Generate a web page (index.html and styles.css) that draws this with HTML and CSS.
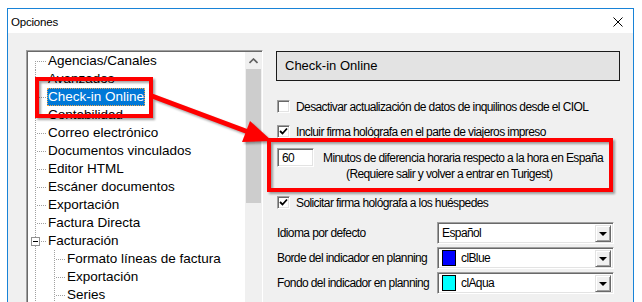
FILE: index.html
```html
<!DOCTYPE html>
<html lang="es">
<head>
<meta charset="UTF-8">
<title>Opciones</title>
<link rel="stylesheet" href="styles.css">
</head>
<body>
<div class="window">
    <div class="titlebar">
        <span class="title">Opciones</span>
        <svg class="close" width="10" height="10" viewBox="0 0 10 10"><path d="M0.5 0.5 L9.5 9.5 M9.5 0.5 L0.5 9.5" stroke="#000" stroke-width="1"/></svg>
    </div>

    <div class="content">
        <div class="tree">
            <ul class="tree-list">
                <li class="node first"><span class="label">Agencias/Canales</span></li>
                <li class="node"><span class="label">Avanzados</span></li>
                <li class="node selected"><span class="label">Check-in Online</span></li>
                <li class="node"><span class="label">Contabilidad</span></li>
                <li class="node"><span class="label">Correo electrónico</span></li>
                <li class="node"><span class="label">Documentos vinculados</span></li>
                <li class="node"><span class="label">Editor HTML</span></li>
                <li class="node"><span class="label">Escáner documentos</span></li>
                <li class="node"><span class="label">Exportación</span></li>
                <li class="node"><span class="label">Factura Directa</span></li>
                <li class="node open"><span class="toggle"></span><span class="label">Facturación</span></li>
                <li class="node child"><span class="label">Formato líneas de factura</span></li>
                <li class="node child"><span class="label">Exportación</span></li>
                <li class="node child"><span class="label">Series</span></li>
            </ul>
            <div class="scrollbar">
                <div class="scroll-up">
                    <svg width="9" height="6" viewBox="0 0 9 6"><path d="M0.5 5 L4.5 1 L8.5 5" fill="none" stroke="#606060" stroke-width="1.6"/></svg>
                </div>
                <div class="scroll-thumb"></div>
            </div>
        </div>

        <div class="page">
            <div class="page-title">Check-in Online</div>

            <div class="check row1"><span class="box"></span>Desactivar actualización de datos de inquilinos desde el CIOL</div>
            <div class="check row2"><span class="box checked"><svg width="9" height="9" viewBox="0 0 9 9"><path d="M1 4 L3.5 6.5 L8 1.5" fill="none" stroke="#000" stroke-width="1.8"/></svg></span>Incluir firma hológrafa en el parte de viajeros impreso</div>

            <div class="minutes">
                <div class="edit">60</div>
                <div class="minutes-label">
                    <span class="line">Minutos de diferencia horaria respecto a la hora en España</span>
                    <span class="line second">(Requiere salir y volver a entrar en Turigest)</span>
                </div>
            </div>

            <div class="check row3"><span class="box checked"><svg width="9" height="9" viewBox="0 0 9 9"><path d="M1 4 L3.5 6.5 L8 1.5" fill="none" stroke="#000" stroke-width="1.8"/></svg></span>Solicitar firma hológrafa a los huéspedes</div>

            <div class="field first-field">
                <span class="field-label">Idioma por defecto</span>
                <div class="combo"><span class="combo-text">Español</span><span class="combo-btn"></span></div>
            </div>
            <div class="field">
                <span class="field-label">Borde del indicador en planning</span>
                <div class="combo"><span class="swatch" style="background:#0000ff"></span><span class="combo-text">clBlue</span><span class="combo-btn"></span></div>
            </div>
            <div class="field">
                <span class="field-label">Fondo del indicador en planning</span>
                <div class="combo"><span class="swatch" style="background:#00ffff"></span><span class="combo-text">clAqua</span><span class="combo-btn"></span></div>
            </div>
        </div>
    </div>
</div>

<!-- anotaciones rojas -->
<svg class="marks" width="642" height="302" viewBox="0 0 642 302">
    <rect x="37" y="79" width="114" height="37" fill="none" stroke="#ff0000" stroke-width="4"/>
    <rect x="269" y="140" width="342" height="50" fill="none" stroke="#ff0000" stroke-width="4"/>
    <line x1="152" y1="96" x2="247" y2="131.5" stroke="#ff0000" stroke-width="5"/>
    <polygon points="242,142 250,121 272,141" fill="#ff0000"/>
</svg>
</body>
</html>
```

FILE: styles.css
```css
body {
  margin: 0;
  background: #fff;
  font-family: "Liberation Sans", Arial, sans-serif;
  color: #000;
  width: 642px;
  height: 302px;
  overflow: hidden;
  position: relative;
}
.window {
  margin: 8px 0 0 7px;
  width: 627px;
  height: 294px;
  box-sizing: border-box;
  border: 1px solid #1883d7;
  border-bottom: none;
  display: flex;
  flex-direction: column;
  overflow: hidden;
}
.titlebar {
  height: 24px;
  flex: none;
  background: #fff;
  display: flex;
  align-items: center;
  justify-content: space-between;
  padding: 0 10px 0 3px;
}
.title {
  font-size: 11.5px;
  letter-spacing: -0.2px;
  margin-top: 1px;
}
.close {
  margin-top: 1px;
}
.content {
  flex: 1;
  background: #f0f0f0;
  display: flex;
  align-items: flex-start;
  padding: 17px 0 0 18px;
}

/* arbol de opciones */
.tree {
  width: 237px;
  height: 270px;
  flex: none;
  box-sizing: border-box;
  border: 1px solid;
  border-color: #a0a0a0 #fff #fff #a0a0a0;
  box-shadow: inset 1px 1px 0 #696969;
  background: #fff;
  display: flex;
  padding: 1px 0 0 1px;
}
.tree-list {
  list-style: none;
  margin: 0;
  padding: 0;
  flex: 1;
}
.node {
  position: relative;
  height: 18px;
  line-height: 18px;
  padding-left: 20px;
  font-size: 13.5px;
  white-space: nowrap;
  background:
    repeating-linear-gradient(to bottom, #a0a0a0 0 1px, transparent 1px 2px) 7px 0 / 1px 100% no-repeat,
    repeating-linear-gradient(to right, #a0a0a0 0 1px, transparent 1px 2px) 9px 9px / 10px 1px no-repeat;
}
.node.first {
  background:
    repeating-linear-gradient(to bottom, #a0a0a0 0 1px, transparent 1px 2px) 7px 9px / 1px 9px no-repeat,
    repeating-linear-gradient(to right, #a0a0a0 0 1px, transparent 1px 2px) 9px 9px / 10px 1px no-repeat;
}
.node.child {
  padding-left: 39px;
  background:
    repeating-linear-gradient(to bottom, #a0a0a0 0 1px, transparent 1px 2px) 7px 0 / 1px 100% no-repeat,
    repeating-linear-gradient(to bottom, #a0a0a0 0 1px, transparent 1px 2px) 26px 0 / 1px 100% no-repeat,
    repeating-linear-gradient(to right, #a0a0a0 0 1px, transparent 1px 2px) 28px 9px / 10px 1px no-repeat;
}
.toggle {
  position: absolute;
  left: 3px;
  top: 5px;
  width: 9px;
  height: 9px;
  box-sizing: border-box;
  border: 1px solid #919191;
  background: #fff linear-gradient(#000, #000) center / 5px 1px no-repeat;
}
.label {
  display: inline-block;
  padding: 0 1px;
  margin-left: -1px;
  height: 18px;
}
.selected .label {
  background: #0078d7;
  color: #fff;
  outline: 1px dotted #f3a64a;
  outline-offset: -1px;
}
.scrollbar {
  width: 17px;
  flex: none;
  background: #f0f0f0;
  display: flex;
  flex-direction: column;
}
.scroll-up {
  height: 17px;
  display: flex;
  align-items: center;
  justify-content: center;
}
.scroll-thumb {
  margin: 0 1px;
  height: 134px;
  background: #cdcdcd;
}

/* pagina derecha */
.page {
  margin-left: 13px;
  margin-top: 1px;
  width: 344px;
  display: flex;
  flex-direction: column;
  font-size: 12px;
  letter-spacing: -0.6px;
  white-space: nowrap;
}
.page-title {
  height: 30px;
  box-sizing: border-box;
  border: 1px solid #1a1a1a;
  background: #e3e3e3;
  font-size: 13px;
  letter-spacing: 0;
  line-height: 28px;
  padding-left: 8px;
}
.check {
  height: 17px;
  display: flex;
  align-items: center;
  padding-left: 1px;
}
.row1 {
  margin-top: 17px;
}
.row2 {
  margin-top: 8px;
}
.row3 {
  margin-top: 12px;
}
.box {
  width: 13px;
  height: 13px;
  box-sizing: border-box;
  flex: none;
  margin-right: 6px;
  background: #fff;
  border: 1px solid;
  border-color: #a0a0a0 #fff #fff #a0a0a0;
  box-shadow: inset 1px 1px 0 #696969, inset -1px -1px 0 #e3e3e3;
  display: flex;
  align-items: center;
  justify-content: center;
}
.minutes {
  margin-top: 8px;
  height: 34px;
  display: flex;
  padding-left: 1px;
}
.edit {
  width: 37px;
  height: 19px;
  box-sizing: border-box;
  background: #fff;
  border: 1px solid;
  border-color: #a0a0a0 #fff #fff #a0a0a0;
  box-shadow: inset 1px 1px 0 #696969, inset -1px -1px 0 #e3e3e3;
  padding: 1px 0 0 4px;
  line-height: 16px;
}
.minutes-label {
  margin: 2px 0 0 9px;
  display: flex;
  flex-direction: column;
  line-height: 16px;
}
.line.second {
  padding-left: 23px;
}
.field {
  height: 22px;
  margin-top: 3px;
  display: flex;
  align-items: center;
  padding-left: 1px;
}
.first-field {
  margin-top: 11px;
}
.field-label {
  width: 160px;
  flex: none;
}
.combo {
  width: 177px;
  height: 22px;
  box-sizing: border-box;
  background: #fff;
  border: 1px solid;
  border-color: #a0a0a0 #fff #fff #a0a0a0;
  box-shadow: inset 1px 1px 0 #696969, inset -1px -1px 0 #e3e3e3;
  display: flex;
  align-items: center;
  padding: 2px 2px 2px 4px;
}
.swatch {
  width: 14px;
  height: 16px;
  box-sizing: border-box;
  border: 1px solid #000;
  flex: none;
  margin-right: 5px;
}
.combo-text {
  flex: 1;
}
.combo-btn {
  width: 16px;
  height: 17px;
  box-sizing: border-box;
  flex: none;
  background: #f0f0f0;
  border: 1px solid;
  border-color: #e3e3e3 #696969 #696969 #e3e3e3;
  box-shadow: inset 1px 1px 0 #fff, inset -1px -1px 0 #a0a0a0;
  position: relative;
}
.combo-btn::after {
  content: "";
  position: absolute;
  left: 3px;
  top: 6px;
  border-left: 4px solid transparent;
  border-right: 4px solid transparent;
  border-top: 4px solid #000;
}

/* anotaciones */
.marks {
  position: absolute;
  left: 0;
  top: 0;
  filter: drop-shadow(2px 2px 1px rgba(0, 0, 0, 0.35));
}
```
